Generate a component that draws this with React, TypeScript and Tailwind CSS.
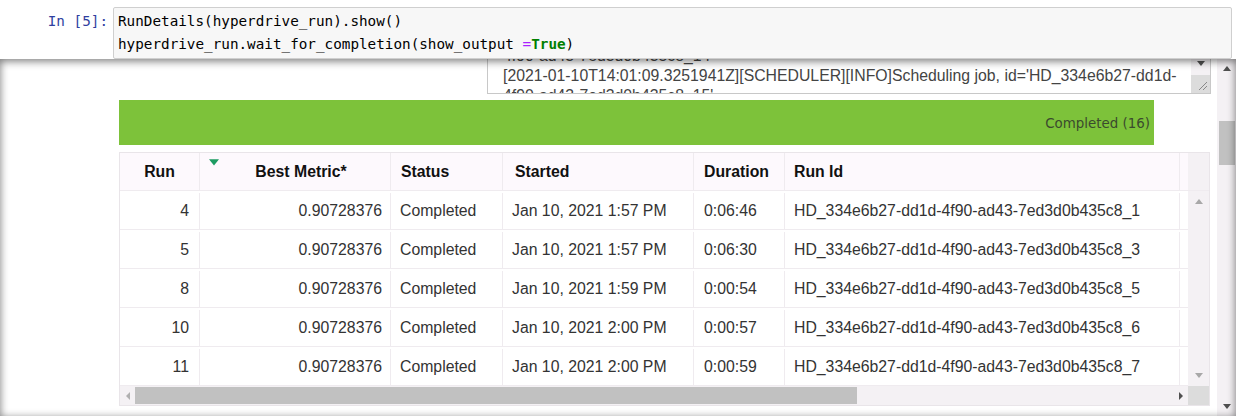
const rows = [
  { run: '4', metric: '0.90728376', status: 'Completed', started: 'Jan 10, 2021 1:57 PM', duration: '0:06:46', id: 'HD_334e6b27-dd1d-4f90-ad43-7ed3d0b435c8_1' },
  { run: '5', metric: '0.90728376', status: 'Completed', started: 'Jan 10, 2021 1:57 PM', duration: '0:06:30', id: 'HD_334e6b27-dd1d-4f90-ad43-7ed3d0b435c8_3' },
  { run: '8', metric: '0.90728376', status: 'Completed', started: 'Jan 10, 2021 1:59 PM', duration: '0:00:54', id: 'HD_334e6b27-dd1d-4f90-ad43-7ed3d0b435c8_5' },
  { run: '10', metric: '0.90728376', status: 'Completed', started: 'Jan 10, 2021 2:00 PM', duration: '0:00:57', id: 'HD_334e6b27-dd1d-4f90-ad43-7ed3d0b435c8_6' },
  { run: '11', metric: '0.90728376', status: 'Completed', started: 'Jan 10, 2021 2:00 PM', duration: '0:00:59', id: 'HD_334e6b27-dd1d-4f90-ad43-7ed3d0b435c8_7' },
];

const cols = 'grid grid-cols-[80px_191px_112px_191px_91px_395px_8px]';
const cell = 'border-r border-[#efebef] flex items-center';

function Tri({ dir, color, size = 8 }: { dir: 'up' | 'down' | 'left' | 'right'; color: string; size?: number }) {
  const pts = {
    up: '0,7 8,7 4,2',
    down: '0,1 8,1 4,6',
    left: '6,0 6,8 2,4',
    right: '2,0 2,8 6,4',
  }[dir];
  return (
    <svg width={size} height={size} viewBox="0 0 8 8">
      <polygon points={pts} fill={color} />
    </svg>
  );
}

export default function App() {
  return (
    <div className="w-[1238px] h-[416px] overflow-hidden bg-white flex flex-col font-['Liberation_Sans',Arial,sans-serif]">
      {/* input cell */}
      <div className="flex pt-[7px] h-[59px] shrink-0">
        <div className="w-[113px] pr-[5px] pt-[3px] text-right font-['DejaVu_Sans_Mono',monospace] text-[14.3px] leading-[23px] text-[#303f9f]">
          In [5]:
        </div>
        <div className="flex-1 mr-[6px] border border-[#cfcfcf] rounded-[2px] bg-[#f7f7f7] px-[4px] py-[2px] font-['DejaVu_Sans_Mono',monospace] text-[14.3px] leading-[23px] text-black whitespace-pre">
          <div>RunDetails(hyperdrive_run).show()</div>
          <div>
            hyperdrive_run.wait_for_completion(show_output <span className="text-[#aa22ff]">=</span>
            <span className="text-[#008000] font-bold">True</span>)
          </div>
        </div>
      </div>

      {/* output area */}
      <div className="relative flex h-[357px] w-[1236px] overflow-hidden">
        <div className="flex-1 flex flex-col">
          {/* log textarea */}
          <div className="ml-[487px] w-[724px] h-[35px] border-x border-b border-[#c8c8c8] flex overflow-hidden">
            <div className="flex-1 pl-[15px] overflow-hidden text-[15.8px] leading-[20px] text-[#444] whitespace-nowrap">
              <div className="-mt-[13px]">4f90-ad43-7ed3d0b435c8_14'</div>
              <div>[2021-01-10T14:01:09.3251941Z][SCHEDULER][INFO]Scheduling job, id='HD_334e6b27-dd1d-</div>
              <div>4f90-ad43-7ed3d0b435c8_15'</div>
            </div>
            <div className="w-[19px] flex flex-col justify-between bg-[#f4f1f4]">
              <div className="flex justify-center pt-[1px]">
                <Tri dir="down" color="#505050" />
              </div>
              <div className="h-[18px] bg-[#dcdcdc] flex items-end justify-end p-[2px]">
                <svg width="10" height="10" viewBox="0 0 10 10">
                  <line x1="1" y1="9" x2="9" y2="1" stroke="#888" strokeWidth="1" />
                  <line x1="5" y1="9" x2="9" y2="5" stroke="#888" strokeWidth="1" />
                </svg>
              </div>
            </div>
          </div>

          {/* status bar */}
          <div className="mt-[6px] ml-[119px] w-[1035px] h-[45px] bg-[#7dc23a] flex items-center justify-end pr-[4px] pt-[4px] font-['DejaVu_Sans',sans-serif] text-[13.4px] text-[#3b4a2e]">
            Completed (16)
          </div>

          {/* table */}
          <div className="mt-[7px] ml-[119px] w-[1091px] border border-[#e9e5e9] flex text-[15.8px] text-[#333]">
            <div className="w-[1068px] flex flex-col">
              <div className={`${cols} h-[38px] bg-[#fdf9fd] border-b border-[#efebef] font-bold text-[#111]`}>
                <div className={`${cell} justify-center`}>Run</div>
                <div className={`${cell} justify-center relative pl-[12px]`}>
                  <div className="absolute left-[9px] top-[5px]">
                    <Tri dir="down" color="#1e9c62" size={10} />
                  </div>
                  Best Metric*
                </div>
                <div className={`${cell} pl-[10px]`}>Status</div>
                <div className={`${cell} pl-[12px]`}>Started</div>
                <div className={`${cell} pl-[10px]`}>Duration</div>
                <div className={`${cell} pl-[9px]`}>Run Id</div>
                <div />
              </div>
              {rows.map((r) => (
                <div key={r.run} className={`${cols} h-[39px] pt-[2px] border-b border-[#efebef]`}>
                  <div className={`${cell} justify-end pr-[10px]`}>{r.run}</div>
                  <div className={`${cell} justify-end pr-[8px]`}>{r.metric}</div>
                  <div className={`${cell} pl-[9px]`}>{r.status}</div>
                  <div className={`${cell} pl-[9px]`}>{r.started}</div>
                  <div className={`${cell} pl-[10px]`}>{r.duration}</div>
                  <div className={`${cell} pl-[9px]`}>{r.id}</div>
                  <div />
                </div>
              ))}
              {/* horizontal scrollbar */}
              <div className="h-[19px] bg-[#f4f1f4] flex items-center">
                <div className="w-[15px] flex justify-center">
                  <Tri dir="left" color="#b0b0b0" />
                </div>
                <div className="flex-1 h-[17px] flex items-center">
                  <div className="w-[722px] h-[17px] bg-[#c1c1c1]" />
                </div>
                <div className="w-[15px] flex justify-center">
                  <Tri dir="right" color="#505050" />
                </div>
              </div>
            </div>
            <div className="w-[21px] flex flex-col bg-[#f4f1f4]">
              <div className="h-[38px] border-b border-[#efebef]" />
              <div className="flex-1 flex flex-col justify-between items-center py-[6px]">
                <Tri dir="up" color="#a8a8a8" />
                <Tri dir="down" color="#a8a8a8" />
              </div>
              <div className="h-[19px] bg-[#dcdcdc]" />
            </div>
          </div>
        </div>

        {/* page scrollbar */}
        <div className="w-[19px] bg-[#f4f1f4] flex flex-col items-center">
          <div className="h-[18px] flex items-center">
            <Tri dir="up" color="#505050" />
          </div>
          <div className="mt-[44px] w-[16px] h-[44px] bg-[#c1c1c1]" />
          <div className="flex-1" />
          <div className="h-[18px] flex items-center">
            <Tri dir="down" color="#505050" />
          </div>
        </div>

        <div className="pointer-events-none absolute inset-0 shadow-[inset_0_2px_8px_rgba(0,0,0,0.55)]" />
      </div>
    </div>
  );
}
